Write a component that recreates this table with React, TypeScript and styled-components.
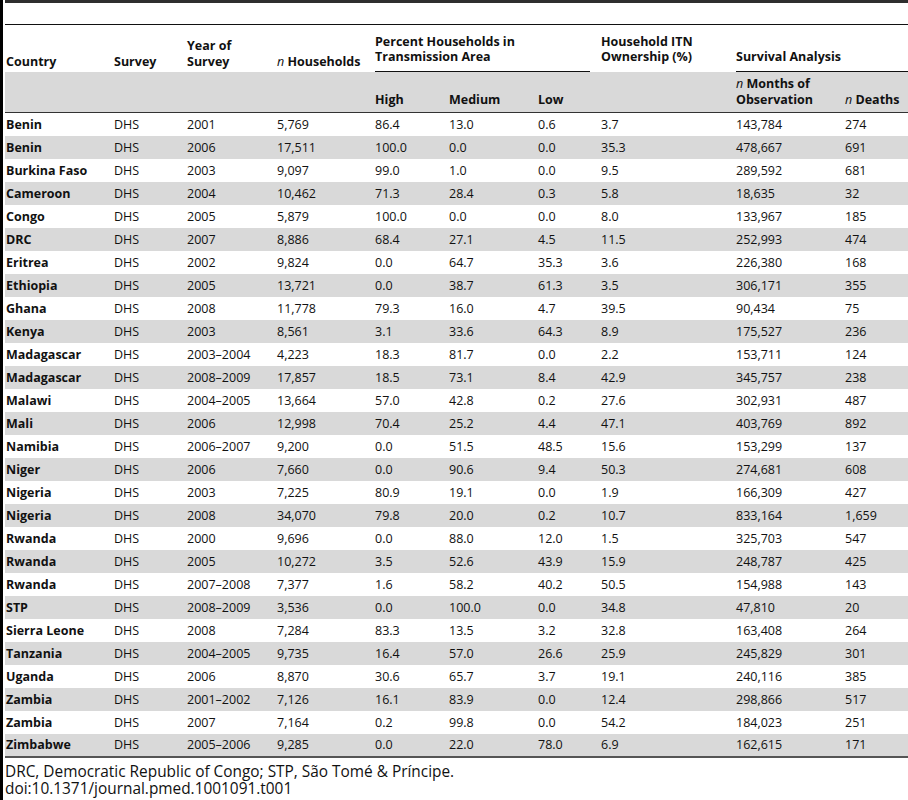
import React from "react";
import styled, { createGlobalStyle } from "styled-components";

const GlobalStyle = createGlobalStyle`
  html, body { margin: 0; padding: 0; background: #fff; }
  body { font-family: "Open Sans", "Noto Sans", sans-serif; color: #111; }
`;

const Page = styled.div`
  box-sizing: border-box;
  min-height: 800px;
  border-left: 3px solid #000;
  padding-left: 2px;
`;

const TopRule = styled.div`
  height: 3px;
  background: #2e2e2e;
  margin-bottom: 21px;
`;

const Table = styled.table`
  width: 903px;
  border-collapse: collapse;
  table-layout: fixed;
  border-top: 1px solid #111;
  border-bottom: 2px solid #555;
  font-size: 12.5px;
  line-height: 15px;
`;

const HeadRow = styled.tr<{ $sub?: boolean }>`
  height: ${(p) => (p.$sub ? "41px" : "47px")};
  background: ${(p) => (p.$sub ? "#d9d9d9" : "#fff")};
  border-bottom: ${(p) => (p.$sub ? "1px solid #333" : "none")};
`;

const Th = styled.th<{ $pb?: number }>`
  text-align: left;
  vertical-align: bottom;
  font-weight: 700;
  color: #111;
  padding: 0 0 ${(p) => (p.$pb ?? 2)}px 1px;
  line-height: 16px;
`;

const GroupLabel = styled.div<{ $gap?: number }>`
  border-bottom: 1px solid #111;
  padding-bottom: 7px;
  margin-right: ${(p) => p.$gap ?? 0}px;
  line-height: 15px;
`;

const PlainLabel = styled.div`
  line-height: 15px;
`;

const Em = styled.i`
  font-weight: 400;
`;

const Row = styled.tr<{ $shade: boolean }>`
  height: 23px;
  background: ${(p) => (p.$shade ? "#d9d9d9" : "#fff")};
`;

const Td = styled.td<{ $bold?: boolean }>`
  padding: 0 0 0 1px;
  vertical-align: middle;
  white-space: nowrap;
  font-weight: ${(p) => (p.$bold ? 700 : 400)};
  color: #111;
`;

const Notes = styled.div`
  padding-top: 5px;
  font-size: 15.4px;
  line-height: 17px;
  color: #111;
`;

const widths = [108, 73, 90, 98, 74, 89, 63, 135, 109, 64];

const rows: string[][] = [
  ["Benin", "DHS", "2001", "5,769", "86.4", "13.0", "0.6", "3.7", "143,784", "274"],
  ["Benin", "DHS", "2006", "17,511", "100.0", "0.0", "0.0", "35.3", "478,667", "691"],
  ["Burkina Faso", "DHS", "2003", "9,097", "99.0", "1.0", "0.0", "9.5", "289,592", "681"],
  ["Cameroon", "DHS", "2004", "10,462", "71.3", "28.4", "0.3", "5.8", "18,635", "32"],
  ["Congo", "DHS", "2005", "5,879", "100.0", "0.0", "0.0", "8.0", "133,967", "185"],
  ["DRC", "DHS", "2007", "8,886", "68.4", "27.1", "4.5", "11.5", "252,993", "474"],
  ["Eritrea", "DHS", "2002", "9,824", "0.0", "64.7", "35.3", "3.6", "226,380", "168"],
  ["Ethiopia", "DHS", "2005", "13,721", "0.0", "38.7", "61.3", "3.5", "306,171", "355"],
  ["Ghana", "DHS", "2008", "11,778", "79.3", "16.0", "4.7", "39.5", "90,434", "75"],
  ["Kenya", "DHS", "2003", "8,561", "3.1", "33.6", "64.3", "8.9", "175,527", "236"],
  ["Madagascar", "DHS", "2003–2004", "4,223", "18.3", "81.7", "0.0", "2.2", "153,711", "124"],
  ["Madagascar", "DHS", "2008–2009", "17,857", "18.5", "73.1", "8.4", "42.9", "345,757", "238"],
  ["Malawi", "DHS", "2004–2005", "13,664", "57.0", "42.8", "0.2", "27.6", "302,931", "487"],
  ["Mali", "DHS", "2006", "12,998", "70.4", "25.2", "4.4", "47.1", "403,769", "892"],
  ["Namibia", "DHS", "2006–2007", "9,200", "0.0", "51.5", "48.5", "15.6", "153,299", "137"],
  ["Niger", "DHS", "2006", "7,660", "0.0", "90.6", "9.4", "50.3", "274,681", "608"],
  ["Nigeria", "DHS", "2003", "7,225", "80.9", "19.1", "0.0", "1.9", "166,309", "427"],
  ["Nigeria", "DHS", "2008", "34,070", "79.8", "20.0", "0.2", "10.7", "833,164", "1,659"],
  ["Rwanda", "DHS", "2000", "9,696", "0.0", "88.0", "12.0", "1.5", "325,703", "547"],
  ["Rwanda", "DHS", "2005", "10,272", "3.5", "52.6", "43.9", "15.9", "248,787", "425"],
  ["Rwanda", "DHS", "2007–2008", "7,377", "1.6", "58.2", "40.2", "50.5", "154,988", "143"],
  ["STP", "DHS", "2008–2009", "3,536", "0.0", "100.0", "0.0", "34.8", "47,810", "20"],
  ["Sierra Leone", "DHS", "2008", "7,284", "83.3", "13.5", "3.2", "32.8", "163,408", "264"],
  ["Tanzania", "DHS", "2004–2005", "9,735", "16.4", "57.0", "26.6", "25.9", "245,829", "301"],
  ["Uganda", "DHS", "2006", "8,870", "30.6", "65.7", "3.7", "19.1", "240,116", "385"],
  ["Zambia", "DHS", "2001–2002", "7,126", "16.1", "83.9", "0.0", "12.4", "298,866", "517"],
  ["Zambia", "DHS", "2007", "7,164", "0.2", "99.8", "0.0", "54.2", "184,023", "251"],
  ["Zimbabwe", "DHS", "2005–2006", "9,285", "0.0", "22.0", "78.0", "6.9", "162,615", "171"],
];

export default function App() {
  return (
    <Page>
      <GlobalStyle />
      <TopRule />
      <Table>
        <colgroup>
          {widths.map((w, i) => (
            <col key={i} style={{ width: w }} />
          ))}
        </colgroup>
        <thead>
          <HeadRow>
            <Th>Country</Th>
            <Th>Survey</Th>
            <Th>
              Year of
              <br />
              Survey
            </Th>
            <Th>
              <Em>n</Em> Households
            </Th>
            <Th colSpan={3} $pb={0}>
              <GroupLabel $gap={10}>
                Percent Households in
                <br />
                Transmission Area
              </GroupLabel>
            </Th>
            <Th $pb={8}>
              <PlainLabel>
                Household ITN
                <br />
                Ownership (%)
              </PlainLabel>
            </Th>
            <Th colSpan={2} $pb={0}>
              <GroupLabel>Survival Analysis</GroupLabel>
            </Th>
          </HeadRow>
          <HeadRow $sub>
            <Th $pb={4} />
            <Th $pb={4} />
            <Th $pb={4} />
            <Th $pb={4} />
            <Th $pb={4}>High</Th>
            <Th $pb={4}>Medium</Th>
            <Th $pb={4}>Low</Th>
            <Th $pb={4} />
            <Th $pb={4}>
              <Em>n</Em> Months of
              <br />
              Observation
            </Th>
            <Th $pb={4}>
              <Em>n</Em> Deaths
            </Th>
          </HeadRow>
        </thead>
        <tbody>
          {rows.map((r, i) => (
            <Row key={i} $shade={i % 2 === 1}>
              {r.map((c, j) => (
                <Td key={j} $bold={j === 0}>
                  {c}
                </Td>
              ))}
            </Row>
          ))}
        </tbody>
      </Table>
      <Notes>
        DRC, Democratic Republic of Congo; STP, São Tomé &amp; Príncipe.
        <br />
        doi:10.1371/journal.pmed.1001091.t001
      </Notes>
    </Page>
  );
}
